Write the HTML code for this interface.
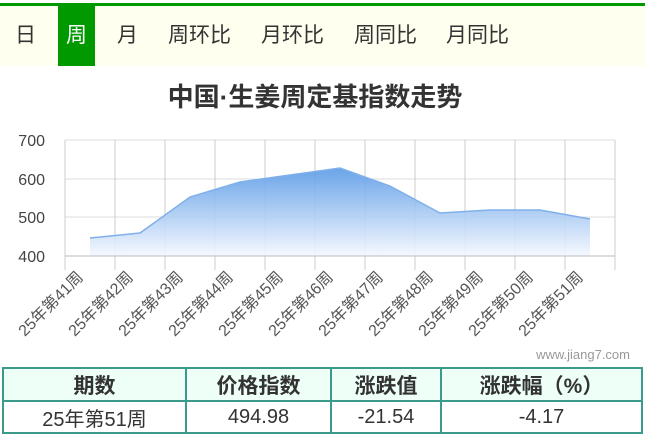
<!DOCTYPE html>
<html><head><meta charset="utf-8"><style>
body{margin:0;width:645px;height:440px;background:#fff;font-family:"Liberation Sans","Noto Sans CJK SC",sans-serif;overflow:hidden;position:relative}
.top{position:absolute;left:0;top:3px;width:645px;height:3px;background:#009900}
.tabs{position:absolute;left:0;top:6px;width:645px;height:60px;background:#fffff0}
.tab{position:absolute;top:0;height:60px;line-height:60px;font-size:21px;color:#333}
.sel{background:#009900;color:#fff;text-align:center}
h1{position:absolute;top:80px;left:0;width:630px;text-align:center;margin:0;font-size:26px;line-height:34px;font-weight:bold;color:#333}
table{position:absolute;left:2px;top:367px;width:641px;border-collapse:collapse;font-size:20px;color:#333}
td{border:2px solid #3a9a8c;text-align:center;padding:0}
tr.h td{background:#eefff7;font-weight:bold;height:31px;font-size:21px}
tr.d td{height:30px}
</style></head><body>
<div class="top"></div>
<div class="tabs">
<div class="tab" style="left:15px">日</div>
<div class="tab sel" style="left:58px;width:37px">周</div>
<div class="tab" style="left:117px">月</div>
<div class="tab" style="left:168px">周环比</div>
<div class="tab" style="left:261px">月环比</div>
<div class="tab" style="left:354px">周同比</div>
<div class="tab" style="left:446px">月同比</div>
</div>
<h1>中国·生姜周定基指数走势</h1>
<svg width="645" height="440" style="position:absolute;left:0;top:0" font-family="Liberation Sans,Noto Sans CJK SC,sans-serif">
<defs><linearGradient id="g" x1="0" y1="0" x2="0" y2="1"><stop offset="0" stop-color="#5a9ae6"/><stop offset="1" stop-color="#f4f8ff"/></linearGradient></defs>
<g stroke="#ddd" stroke-width="1">
<line x1="65" y1="140" x2="615" y2="140"/><line x1="65" y1="179" x2="615" y2="179"/><line x1="65" y1="217" x2="615" y2="217"/>
</g>
<g stroke="#ccc" stroke-width="1">
<line x1="65" y1="140" x2="65" y2="270"/><line x1="115" y1="140" x2="115" y2="270"/><line x1="165" y1="140" x2="165" y2="270"/><line x1="215" y1="140" x2="215" y2="270"/><line x1="265" y1="140" x2="265" y2="270"/><line x1="315" y1="140" x2="315" y2="270"/><line x1="365" y1="140" x2="365" y2="270"/><line x1="415" y1="140" x2="415" y2="270"/><line x1="465" y1="140" x2="465" y2="270"/><line x1="515" y1="140" x2="515" y2="270"/><line x1="565" y1="140" x2="565" y2="270"/><line x1="615" y1="140" x2="615" y2="270"/>
</g>
<path d="M90,238 L140,233 L190,197 L240,182 L290,175 L340,168 L390,186 L440,213 L490,210 L540,210 L590,219 L590,256 L90,256Z" fill="url(#g)" opacity="0.9"/>
<polyline points="90,238 140,233 190,197 240,182 290,175 340,168 390,186 440,213 490,210 540,210 590,219" fill="none" stroke="#7fb0ea" stroke-width="1.5"/>
<line x1="65" y1="256" x2="615" y2="256" stroke="#bbb"/>
<g font-size="16" fill="#444" text-anchor="end">
<text x="45" y="146">700</text><text x="45" y="185">600</text><text x="45" y="223">500</text><text x="45" y="262">400</text>
</g>
<g font-size="16" fill="#555" text-anchor="end">
<text transform="translate(84,278) rotate(-45)">25年第41周</text>
<text transform="translate(134,278) rotate(-45)">25年第42周</text>
<text transform="translate(184,278) rotate(-45)">25年第43周</text>
<text transform="translate(234,278) rotate(-45)">25年第44周</text>
<text transform="translate(284,278) rotate(-45)">25年第45周</text>
<text transform="translate(334,278) rotate(-45)">25年第46周</text>
<text transform="translate(384,278) rotate(-45)">25年第47周</text>
<text transform="translate(434,278) rotate(-45)">25年第48周</text>
<text transform="translate(484,278) rotate(-45)">25年第49周</text>
<text transform="translate(534,278) rotate(-45)">25年第50周</text>
<text transform="translate(584,278) rotate(-45)">25年第51周</text>
</g>
<text x="630" y="359" font-size="13" fill="#999" text-anchor="end">www.jiang7.com</text>
</svg>
<table>
<tr class="h"><td style="width:181px">期数</td><td style="width:143px">价格指数</td><td style="width:108px">涨跌值</td><td>涨跌幅（%）</td></tr>
<tr class="d"><td>25年第51周</td><td>494.98</td><td>-21.54</td><td>-4.17</td></tr>
</table>
</body></html>
